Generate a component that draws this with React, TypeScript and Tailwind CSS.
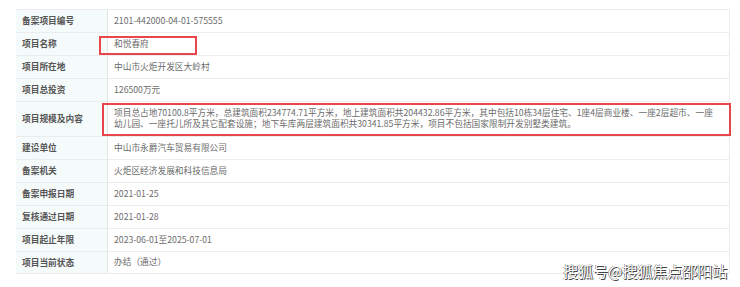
const rows: { label: string; value: string; tall?: boolean }[] = [
  { label: "备案项目编号", value: "2101-442000-04-01-575555" },
  { label: "项目名称", value: "和悦春府" },
  { label: "项目所在地", value: "中山市火炬开发区大岭村" },
  { label: "项目总投资", value: "126500万元" },
  {
    label: "项目规模及内容",
    value:
      "项目总占地70100.8平方米，总建筑面积234774.71平方米，地上建筑面积共204432.86平方米，其中包括10栋34层住宅、1座4层商业楼、一座2层超市、一座幼儿园、一座托儿所及其它配套设施；地下车库两层建筑面积共30341.85平方米，项目不包括国家限制开发别墅类建筑。",
    tall: true,
  },
  { label: "建设单位", value: "中山市永爵汽车贸易有限公司" },
  { label: "备案机关", value: "火炬区经济发展和科技信息局" },
  { label: "备案申报日期", value: "2021-01-25" },
  { label: "复核通过日期", value: "2021-01-28" },
  { label: "项目起止年限", value: "2023-06-01至2025-07-01" },
  { label: "项目当前状态", value: "办结（通过）" },
];

export default function App() {
  return (
    <div
      className="relative w-[740px] h-[287px] bg-white overflow-hidden"
      style={{ fontFamily: '"Noto Sans CJK SC", "Noto Sans", sans-serif' }}
    >
      <div className="ml-4 mt-[9px] w-[714px] border-r border-[#ececec]">
        {rows.map((r, i) => (
          <div
            key={i}
            className={`flex border-t border-[#ececec] ${i === rows.length - 1 ? "border-b" : ""} ${r.tall ? "h-[35px]" : "h-[23px]"}`}
          >
            <div className="w-[92px] shrink-0 bg-[#f5fafb] border-r border-[#e6e6e6] pl-[6px] flex items-center text-[8.7px] font-bold text-[#555]">
              {r.label}
            </div>
            <div className="flex-1 pl-[6px] pr-2 flex items-center text-[8.7px] leading-[10.7px] text-[#6b6b6b]">
              {r.value}
            </div>
          </div>
        ))}
      </div>

      {/* red highlight boxes */}
      <div className="absolute left-[99px] top-[36px] w-[98px] h-[19px] border-2 border-[#e8464c]" />
      <div className="absolute left-[102px] top-[103px] w-[629px] h-[33px] border-2 border-[#e8464c]" />

      {/* watermark */}
      <div
        className="absolute left-[563px] top-[262px] text-[15px] leading-[18px] text-white"
        style={{ textShadow: "1px 1px 0 #444, -0.5px -0.5px 0 #666" }}
      >
        搜狐号@搜狐焦点邵阳站
      </div>
    </div>
  );
}
